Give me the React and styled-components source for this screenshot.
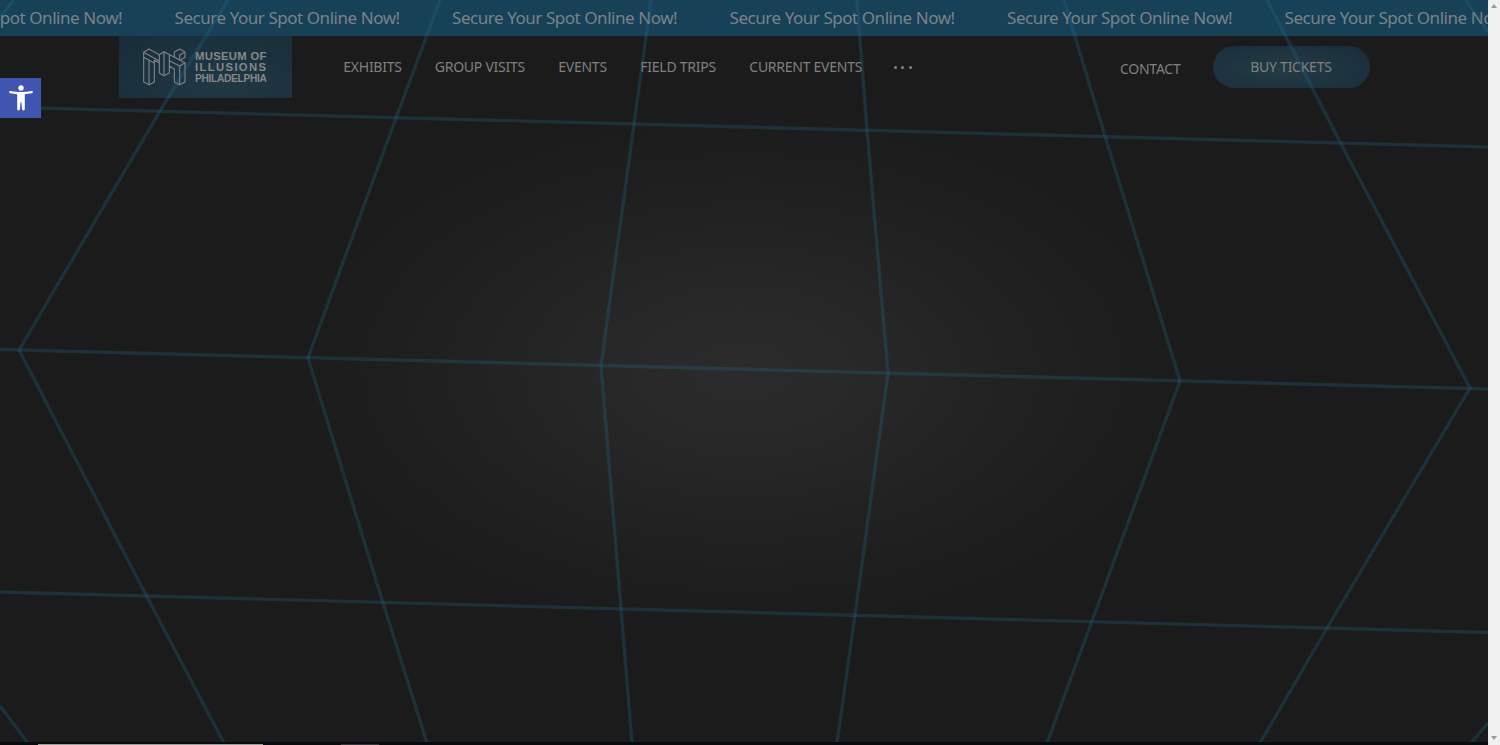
import React from "react";
import styled, { createGlobalStyle } from "styled-components";

const GlobalStyle = createGlobalStyle`
  * { box-sizing: border-box; }
  body { margin: 0; background: #1b1b1b; overflow: hidden; }
`;

const Page = styled.div`
  display: flex;
  width: 1500px;
  height: 745px;
  font-family: "Noto Sans", sans-serif;
  color: #808080;
  overflow: hidden;
`;

const Content = styled.main`
  position: relative;
  display: flex;
  flex-direction: column;
  width: 1487.5px;
  background: radial-gradient(ellipse 470px 270px at 743px 372px,
    #2b2b2b 0%, #282828 25%, #222222 55%, #1e1e1e 78%, #1b1b1b 100%) #1b1b1b;
`;

const Marquee = styled.div`
  display: flex;
  flex-shrink: 0;
  align-items: center;
  gap: 52px;
  height: 36px;
  background: #174157;
  overflow: hidden;
`;

const MarqueeItem = styled.span`
  flex: none;
  width: 225.5px;
  margin-left: ${({ $lead }) => ($lead ? "-103px" : "0")};
  font-size: 17px;
  line-height: 36px;
  letter-spacing: -0.45px;
  color: #7c8286;
  white-space: nowrap;
`;

const Header = styled.header`
  display: flex;
  align-items: flex-start;
  height: 63px;
  padding-left: 118.5px;
`;

const Logo = styled.a`
  display: flex;
  gap: 8px;
  width: 173px;
  height: 62px;
  padding: 11px 0 0 23.5px;
  background: radial-gradient(ellipse at 58% 75%, #213945 0%, #1b323e 55%, #182c38 100%);
`;

const LogoMark = styled.svg`
  width: 45px;
  height: 40px;
  fill: none;
  stroke: #7d8386;
  stroke-width: 3.4;
  stroke-linejoin: round;
`;

const LogoWords = styled.div`
  display: flex;
  flex-direction: column;
  padding-top: 4px;
  font: bold 11.3px/11.2px "Liberation Sans", Arial, sans-serif;
  color: #84888a;
`;

const LogoWord = styled.span`
  font-size: ${({ $size }) => $size || 11.3}px;
  letter-spacing: ${({ $spacing }) => $spacing}px;
  white-space: nowrap;
`;

const Nav = styled.nav`
  display: flex;
  align-items: center;
  gap: 33px;
  height: 62px;
  margin-left: 51.8px;
`;

const NavLink = styled.a`
  width: ${({ $width }) => $width}px;
  font-size: 14px;
  line-height: 20px;
  letter-spacing: -0.26px;
  white-space: nowrap;
  margin-top: ${({ $drop }) => $drop || 0}px;
`;

const Dots = styled.span`
  display: flex;
  gap: 4.5px;
  margin-left: -1px;
`;

const Dot = styled.i`
  width: 3px;
  height: 3px;
  border-radius: 50%;
  background: #858585;
`;

const Actions = styled.div`
  display: flex;
  align-items: center;
  gap: 33px;
  height: 62px;
  margin-left: auto;
  margin-right: 118px;
`;

const BuyButton = styled.a`
  display: flex;
  align-items: center;
  justify-content: center;
  width: 156.5px;
  height: 42px;
  border-radius: 21px;
  background: radial-gradient(ellipse at 45% 55%, #253b46 0%, #1c323e 60%, #182d39 100%);
`;

const Grid = styled.svg`
  position: absolute;
  inset: 0;
  width: 1488px;
  height: 742px;
  fill: none;
  stroke: rgba(33, 113, 143, 0.26);
  stroke-width: 3.4;
  pointer-events: none;
`;

const AccessButton = styled.button`
  position: absolute;
  left: 0;
  top: 77.5px;
  display: flex;
  align-items: center;
  justify-content: center;
  width: 41px;
  height: 40.5px;
  padding: 0;
  border: 0;
  background: #4054b2;
`;

const BottomEdge = styled.div`
  display: flex;
  height: 3px;
  margin-top: auto;
  padding: 2px 0 0 38px;
  background: #070c10;
`;

const EdgeStrip = styled.div`
  width: ${({ $width }) => $width}px;
  margin-right: 78px;
  background: ${({ $color }) => $color};
`;

const ScrollBar = styled.aside`
  display: flex;
  flex-direction: column;
  align-items: center;
  justify-content: space-between;
  width: 12.5px;
  padding: 4px 0 5px;
  background: #f0f0f0;
`;

const Arrow = styled.i`
  border: 3px solid transparent;
  border-top: ${({ $up }) => ($up ? "0" : "4px solid #9a9a9a")};
  border-bottom: ${({ $up }) => ($up ? "4px solid #9a9a9a" : "0")};
`;

const links = [
  ["EXHIBITS", 58.5],
  ["GROUP VISITS", 90.5],
  ["EVENTS", 49],
  ["FIELD TRIPS", 76],
  ["CURRENT EVENTS", 112.5],
];

export default function App() {
  return (
    <>
      <GlobalStyle />
      <Page>
        <Content>
          <Marquee>
            {[0, 1, 2, 3, 4, 5].map((n) => (
              <MarqueeItem key={n} $lead={n === 0}>Secure Your Spot Online Now!</MarqueeItem>
            ))}
          </Marquee>
          <Header>
            <Logo>
              <LogoMark viewBox="426 141 135 120">
                <path d="M431 157 447 147 478 164 492 155 555 188V246L539 254 523 246V207L508 198V219L492 227 478 219V188L463 181V246L447 254 431 246Z" />
                <path d="M431 157 478 183M447 254V181L463 189M478 164V190M492 155V227M508 165V198M508 182 539 198 555 188M539 198V254M447 181 431 172" />
                <path d="M523 171V156L539 147 555 156V172L542 180M555 156 539 165V178" />
              </LogoMark>
              <LogoWords>
                <LogoWord $spacing={0.3}>MUSEUM OF</LogoWord>
                <LogoWord $spacing={1.35}>ILLUSIONS</LogoWord>
                <LogoWord $spacing={-0.3} $size={10.2}>PHILADELPHIA</LogoWord>
              </LogoWords>
            </Logo>
            <Nav>
              {links.map(([label, width]) => (
                <NavLink key={label} $width={width}>{label}</NavLink>
              ))}
              <Dots><Dot /><Dot /><Dot /></Dots>
            </Nav>
            <Actions>
              <NavLink $width={60} $drop={3}>CONTACT</NavLink>
              <BuyButton><NavLink $width={82}>BUY TICKETS</NavLink></BuyButton>
            </Actions>
          </Header>
          <BottomEdge>
            <EdgeStrip $width={225} $color="#a09c9c" />
            <EdgeStrip $width={38} $color="#3c3039" />
          </BottomEdge>
          <Grid viewBox="0 0 1488 742">
            <path d="M0 107 1488 147M0 349.5 1488 389M0 592 1488 632.5" />
            <path d="M14 0 0 17M228 0 160 111 19 350 147 597 224 743M440 0 396 118 308 358 383 603 427 743M651 0 634 124 601 366 621 609 632 743M857 0 867 130 888 373 855 615 837 743M1064 0 1105 136 1180 381 1092 621 1047 743M1267 0 1340 142 1470 388 1327 628 1260 743M1466 0 1488 32M0 706 28 743M1488 723 1471 743" />
          </Grid>
          <AccessButton aria-label="Accessibility">
            <svg width="24" height="26" viewBox="0 0 24 26" fill="#fff">
              <circle cx="12" cy="3" r="2.7" />
              <path d="M1.2 6Q12 8 22.8 6Q24 6.1 23.8 7.2Q23.6 8 22.8 8.2L15.8 9.2V24Q15.7 25.4 14.4 25.4Q13.3 25.4 13 24L12.5 17.5H11.5L11 24Q10.8 25.4 9.6 25.4Q8.2 25.4 8.2 24V9.2L1.2 8.2Q.3 8 .2 7.2Q.1 6.1 1.2 6Z" />
            </svg>
          </AccessButton>
        </Content>
        <ScrollBar><Arrow $up /><Arrow /></ScrollBar>
      </Page>
    </>
  );
}
